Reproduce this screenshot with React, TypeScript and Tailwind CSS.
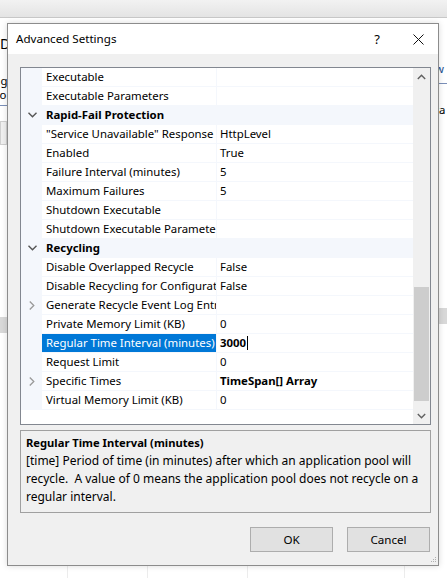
import React from "react";

type Row = {
  name?: string;
  value?: string;
  cat?: string;
  expand?: boolean;
  bold?: boolean;
  selected?: boolean;
};

const rows: Row[] = [
  { name: "Executable" },
  { name: "Executable Parameters" },
  { cat: "Rapid-Fail Protection" },
  { name: '"Service Unavailable" Response Type', value: "HttpLevel" },
  { name: "Enabled", value: "True" },
  { name: "Failure Interval (minutes)", value: "5" },
  { name: "Maximum Failures", value: "5" },
  { name: "Shutdown Executable" },
  { name: "Shutdown Executable Parameters" },
  { cat: "Recycling" },
  { name: "Disable Overlapped Recycle", value: "False" },
  { name: "Disable Recycling for Configuration Changes", value: "False" },
  { name: "Generate Recycle Event Log Entry", expand: true },
  { name: "Private Memory Limit (KB)", value: "0" },
  { name: "Regular Time Interval (minutes)", value: "3000", bold: true, selected: true },
  { name: "Request Limit", value: "0" },
  { name: "Specific Times", value: "TimeSpan[] Array", bold: true, expand: true },
  { name: "Virtual Memory Limit (KB)", value: "0" },
];

const ChevronDown = () => (
  <svg width="9" height="6" viewBox="0 0 9 6" className="block">
    <path d="M0.5 0.8 L4.5 4.8 L8.5 0.8" fill="none" stroke="#555" strokeWidth="1.4" />
  </svg>
);

const ChevronRight = () => (
  <svg width="6" height="9" viewBox="0 0 6 9" className="block">
    <path d="M0.8 0.5 L4.8 4.5 L0.8 8.5" fill="none" stroke="#9a9a9a" strokeWidth="1.3" />
  </svg>
);

const GridRow: React.FC<{ row: Row }> = ({ row }) => {
  if (row.cat) {
    return (
      <div className="flex h-[19px] items-center bg-[#f4f7fc] border-b border-[#f4f7fc]">
        <div className="flex w-[21px] shrink-0 justify-center pl-[2px]">
          <ChevronDown />
        </div>
        <div className="pl-[4px] font-bold text-black">{row.cat}</div>
      </div>
    );
  }
  return (
    <div className="flex h-[19px] border-b border-[#f4f7fc]">
      <div className="flex w-[21px] shrink-0 items-center justify-center bg-[#f4f7fc] pl-[1px]">
        {row.expand && <ChevronRight />}
      </div>
      <div
        className={`flex w-[174px] shrink-0 items-center overflow-hidden whitespace-nowrap pl-[4px] ${
          row.selected ? "bg-[#0078d7] text-white" : "bg-white text-black"
        }`}
      >
        {row.name}
      </div>
      <div className="w-px shrink-0 bg-[#f4f7fc]" />
      <div
        className={`flex flex-1 items-center overflow-hidden whitespace-nowrap bg-white pl-[3px] text-black ${
          row.bold ? "font-bold" : ""
        }`}
      >
        {row.value}
        {row.selected && <span className="ml-px inline-block h-[14px] w-px bg-black" />}
      </div>
    </div>
  );
};

const Scrollbar = () => (
  <div className="flex w-[17px] shrink-0 flex-col bg-[#f0f0f0]">
    <div className="flex h-[17px] items-center justify-center">
      <svg width="9" height="6" viewBox="0 0 9 6">
        <path d="M0.8 5 L4.5 1.3 L8.2 5" fill="none" stroke="#606060" strokeWidth="1.4" />
      </svg>
    </div>
    <div className="flex flex-1 flex-col">
      <div className="h-[202px]" />
      <div className="mx-px h-[114px] bg-[#cdcdcd]" />
    </div>
    <div className="flex h-[17px] items-center justify-center">
      <svg width="9" height="6" viewBox="0 0 9 6">
        <path d="M0.8 1 L4.5 4.7 L8.2 1" fill="none" stroke="#606060" strokeWidth="1.4" />
      </svg>
    </div>
  </div>
);

const Button: React.FC<{ label: string }> = ({ label }) => (
  <button className="flex h-[25px] w-[83px] items-center justify-center border border-[#adadad] bg-[#e1e1e1] text-[11.6px] text-black">
    {label}
  </button>
);

export default function App() {
  return (
    <div className="relative h-[578px] w-[447px] overflow-hidden bg-white font-['Noto_Sans',sans-serif] text-[11.4px] leading-none text-black">
      {/* background application */}
      <div className="h-[18px] border-b border-[#c8c8c8] bg-gradient-to-b from-[#f2f2f2] to-[#e4e4e4]" />
      <div className="flex h-[547px] justify-between">
        <div className="flex w-[7px] flex-col overflow-hidden">
          <div className="mt-[19px] text-[14px]">D</div>
          <div className="mt-[24px] -ml-[6px] whitespace-nowrap">ag</div>
          <div className="mt-[3px] -ml-[6px] whitespace-nowrap">so</div>
          <div className="mt-[4px] h-px bg-[#7a8fb8]" />
          <div className="mt-[15px] h-[24px] border border-[#d0d0d0] bg-[#f0f0f0]" />
          <div className="mt-[172px] h-[16px] bg-[#d8d8d8]" />
        </div>
        <div className="flex w-[9px] flex-col overflow-hidden">
          <div className="mt-[45px] -ml-[3px] whitespace-nowrap text-[#1a4d8f]">w</div>
          <div className="mt-[9px] h-px bg-[#7a8fb8]" />
          <div className="mt-[20px] -ml-[3px] whitespace-nowrap">ta</div>
          <div className="mt-[192px] h-[16px] bg-[#d8d8d8]" />
        </div>
      </div>
      <div className="flex h-[13px]">
        <div className="ml-[67px] w-px bg-[#ececec]" />
        <div className="ml-[79px] w-px bg-[#ececec]" />
        <div className="ml-[99px] w-px bg-[#ececec]" />
        <div className="ml-[156px] w-px bg-[#ececec]" />
      </div>

      {/* dialog window */}
      <div className="absolute left-[7px] top-[23px] flex h-[543px] w-[432px] flex-col border border-[#8c8c8c] bg-[#f0f0f0] shadow-[0_0_6px_rgba(0,0,0,0.15)]">
        <div className="flex h-[30px] shrink-0 items-center bg-white pl-[8px]">
          <span className="text-[11.6px]">Advanced Settings</span>
          <span className="ml-auto mr-[33px] text-[13px]">?</span>
          <svg width="11" height="11" viewBox="0 0 11 11" className="mr-[14px]">
            <path d="M0.5 0.5 L10.5 10.5 M10.5 0.5 L0.5 10.5" stroke="#111" strokeWidth="1" />
          </svg>
        </div>

        <div className="flex flex-1 flex-col pl-[12px] pr-[7px] pt-[13px]">
          {/* property grid */}
          <div className="flex h-[358px] border border-[#828790] bg-white">
            <div className="flex flex-1 flex-col">
              {rows.map((r, i) => (
                <GridRow key={i} row={r} />
              ))}
            </div>
            <Scrollbar />
          </div>

          {/* description */}
          <div className="mt-[5px] h-[83px] border border-[#a0a0a0] bg-[#f0f0f0] pl-[5px] pt-[4px]">
            <div className="text-[11.2px] font-bold leading-[16px]">Regular Time Interval (minutes)</div>
            <div className="mt-[1px] text-[12px] leading-[18px]">
              [time] Period of time (in minutes) after which an application pool will
              <br />
              recycle.&nbsp; A value of 0 means the application pool does not recycle on a
              <br />
              regular interval.
            </div>
          </div>

          <div className="mt-[14px] flex justify-end gap-[14px] pr-px">
            <Button label="OK" />
            <Button label="Cancel" />
          </div>
          <div className="mt-auto flex justify-end pb-[2px]">
            <svg width="6" height="6" viewBox="0 0 6 6" className="-mr-[6px]">
              <g fill="#b0b0b0">
                <rect x="4" y="0" width="1" height="1" />
                <rect x="2" y="2" width="1" height="1" />
                <rect x="4" y="2" width="1" height="1" />
                <rect x="0" y="4" width="1" height="1" />
                <rect x="2" y="4" width="1" height="1" />
                <rect x="4" y="4" width="1" height="1" />
              </g>
            </svg>
          </div>
        </div>
      </div>
    </div>
  );
}
